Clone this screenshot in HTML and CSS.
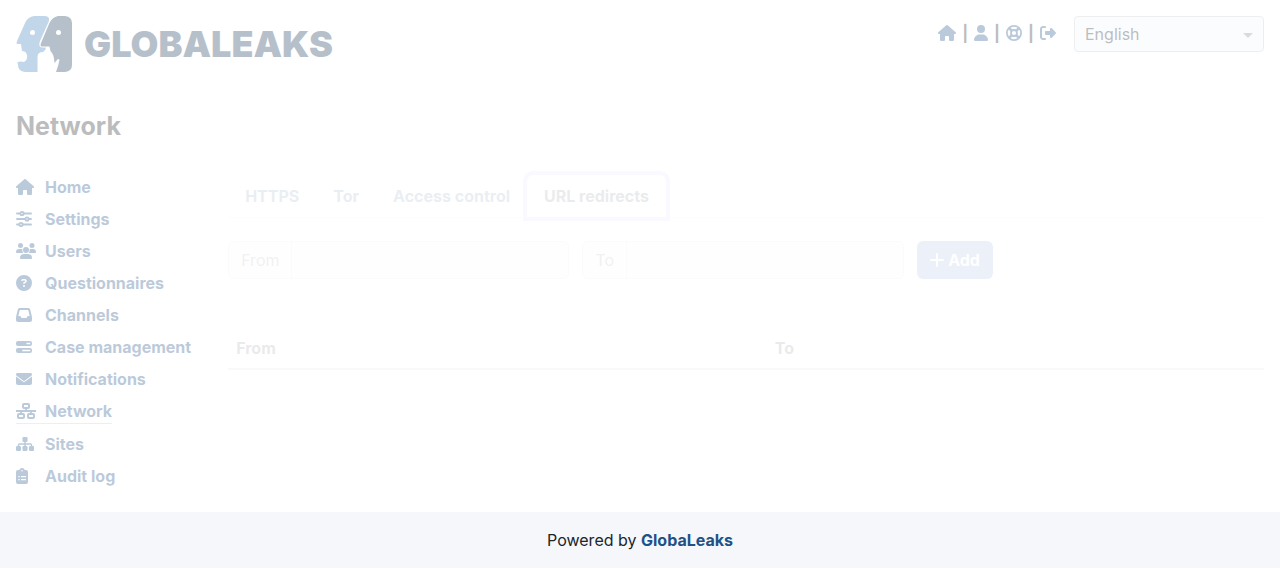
FILE: index.html
```html
<!DOCTYPE html>
<html lang="en">
<head>
<meta charset="utf-8">
<meta name="viewport" content="width=device-width, initial-scale=1">
<title>GlobaLeaks - Network</title>
<link rel="stylesheet" href="styles.css">
</head>
<body>
<div class="page">
  <header class="header">
    <a class="logo" href="#" aria-label="GlobaLeaks">
      <svg class="logo-mark" viewBox="0 0 56 56" aria-hidden="true">
        <path fill="#377abc" d="M18 0H28Q34 0 33 5L24 25Q22 31 26 31.500H30Q30 34 27 36Q21.500 36 21.500 41V56H9Q2 55 2 49L1.500 46Q5 45 8 46Q12 44 11 39Q10 35 6 35L5 28H1Q0 27 1 25L9.500 6Q12 1 18 0Z"/>
        <path fill="#103253" d="M42 0H49Q56 1 56 7V49Q56 55 49 56H40L42 50L43.500 44Q42.500 42 41 44L38.500 47Q38 38 34.500 35L33.500 30.500H25Q24 29 25 27L33 8Q36 1 42 0Z"/>
        <circle cx="16.500" cy="16.500" r="2.500" fill="#fff"/>
        <circle cx="42.500" cy="16.500" r="2.500" fill="#fff"/>
      </svg>
      <span class="logo-text">GLOBALEAKS</span>
    </a>
    <div class="header-tools">
      <nav class="quick" aria-label="Account">
        <a href="#" aria-label="Home"><svg class="icon" viewBox="0 0 576 512"><use href="#i-home"/></svg></a>
        <span>|</span>
        <a href="#" aria-label="Preferences"><svg class="icon" viewBox="0 0 448 512"><path d="M224 256A128 128 0 1 0 224 0a128 128 0 1 0 0 256zm-45.700 48C79.800 304 0 383.800 0 482.300C0 498.700 13.300 512 29.700 512H418.300c16.400 0 29.700-13.300 29.700-29.700C448 383.800 368.200 304 269.700 304H178.300z"/></svg></a>
        <span>|</span>
        <a href="#" aria-label="Support"><svg class="icon line" viewBox="0 0 16 16"><circle cx="8" cy="8" r="7.100" stroke-width="1.800"/><circle cx="8" cy="8" r="3" stroke-width="1.800"/><path stroke-width="2.500" d="M3 3l3 3M13 3l-3 3M3 13l3-3M13 13l-3-3"/></svg></a>
        <span>|</span>
        <a href="#" aria-label="Log out"><svg class="icon" viewBox="0 0 512 512"><path d="M377.900 105.900L500.700 228.700c7.200 7.200 11.300 17.100 11.300 27.300s-4.100 20.100-11.300 27.300L377.900 406.100c-6.400 6.400-15 9.900-24 9.900c-18.700 0-33.900-15.200-33.900-33.900l0-62.100-128 0c-17.700 0-32-14.300-32-32l0-64c0-17.700 14.300-32 32-32l128 0 0-62.100c0-18.700 15.200-33.900 33.900-33.900c9 0 17.600 3.600 24 9.900zM160 96L96 96c-17.700 0-32 14.300-32 32l0 256c0 17.700 14.300 32 32 32l64 0c17.700 0 32 14.300 32 32s-14.300 32-32 32l-64 0c-53 0-96-43-96-96L0 128C0 75 43 32 96 32l64 0c17.700 0 32 14.300 32 32s-14.300 32-32 32z"/></svg></a>
      </nav>
      <div class="language">
        <select aria-label="Language"><option>English</option></select>
        <svg class="caret" viewBox="0 0 10 5" aria-hidden="true"><path d="M0 0H10L5 5Z"/></svg>
      </div>
    </div>
  </header>

  <h1 class="title">Network</h1>

  <div class="columns">
    <nav class="sidebar" aria-label="Administration">
      <a href="#"><span class="slot"><svg class="icon" viewBox="0 0 576 512"><path id="i-home" d="M575.800 255.500c0 18-15 32.100-32 32.100h-32l.7 160.200c0 2.700-.2 5.400-.5 8.100V472c0 22.100-17.900 40-40 40H456c-1.100 0-2.200 0-3.300-.1c-1.400 .1-2.800 .1-4.200 .1H416 392c-22.100 0-40-17.900-40-40V448 384c0-17.700-14.300-32-32-32H256c-17.700 0-32 14.300-32 32v64 24c0 22.100-17.900 40-40 40H160 128.100c-1.500 0-3-.1-4.500-.2c-1.200 .1-2.400 .2-3.600 .2H104c-22.100 0-40-17.900-40-40V360c0-.9 0-1.900 .1-2.800V287.600H32c-18 0-32-14-32-32.100c0-9 3-17 10-24L266.400 8c7-7 15-8 22-8s15 2 21 7L564.800 231.500c8 7 12 15 11 24z"/></svg></span>Home</a>
      <a href="#"><span class="slot"><svg class="icon line" viewBox="0 0 16 16" stroke-width="1.900" stroke-linecap="round"><path d="M1 2.500H4M8 2.500H15M1 8H9M13 8H15M1 13.500H3M7 13.500H15"/><circle cx="6" cy="2.500" r="1.600"/><circle cx="11" cy="8" r="1.600"/><circle cx="5" cy="13.500" r="1.600"/></svg></span>Settings</a>
      <a href="#"><span class="slot"><svg class="icon" viewBox="0 0 20 16"><circle cx="4.500" cy="2.500" r="2.500"/><circle cx="16" cy="2.500" r="2.500"/><circle cx="10" cy="7" r="3"/><path d="M3.300 6H5Q6 6 6.500 6.300Q6 8.500 7.300 10H.7Q0 10 0 9.300Q0 6 3.300 6ZM15 6H16.700Q20 6 20 9.300Q20 10 19.300 10H12.700Q14 8.500 13.500 6.300Q14 6 15 6ZM8.200 11H11.800Q16 11 16 15.200Q16 16 15.200 16H4.800Q4 16 4 15.200Q4 11 8.200 11Z"/></svg></span>Users</a>
      <a href="#"><span class="slot"><svg class="icon" viewBox="0 0 512 512"><path d="M256 512A256 256 0 1 0 256 0a256 256 0 1 0 0 512zM169.800 165.300c7.900-22.300 29.100-37.300 52.800-37.300h58.300c34.900 0 63.100 28.300 63.100 63.100c0 22.600-12.100 43.500-31.700 54.800L280 264.400c-.2 13-10.900 23.600-24 23.600c-13.300 0-24-10.700-24-24V250.500c0-8.600 4.600-16.500 12.100-20.800l44.300-25.400c4.700-2.700 7.600-7.700 7.600-13.100c0-8.400-6.800-15.100-15.100-15.100H222.600c-3.400 0-6.400 2.100-7.500 5.300l-.4 1.200c-4.400 12.500-18.200 19-30.600 14.600s-19-18.200-14.600-30.600l.4-1.200zM224 352a32 32 0 1 1 64 0 32 32 0 1 1 -64 0z"/></svg></span>Questionnaires</a>
      <a href="#"><span class="slot"><svg class="icon" viewBox="0 0 512 512"><path d="M121 32C91.600 32 66 52 58.900 80.500L1.900 308.400C.6 313.500 0 318.700 0 323.900V416c0 35.300 28.700 64 64 64H448c35.300 0 64-28.700 64-64V323.900c0-5.200-.6-10.400-1.900-15.500l-57-227.900C446 52 420.400 32 391 32H121zm0 64H391l48 192H387.800c-12.100 0-23.200 6.800-28.600 17.700l-14.300 28.600c-5.400 10.800-16.500 17.700-28.600 17.700H195.800c-12.100 0-23.200-6.800-28.600-17.700l-14.300-28.600c-5.400-10.800-16.500-17.700-28.600-17.700H73L121 96z"/></svg></span>Channels</a>
      <a href="#"><span class="slot"><svg class="icon" viewBox="0 0 16 16"><path fill-rule="evenodd" d="M2 2H14Q16 2 16 4V5Q16 7 14 7H2Q0 7 0 5V4Q0 2 2 2ZM10.500 3.800V5.200H14.300V3.800ZM2 9H14Q16 9 16 11V12Q16 14 14 14H2Q0 14 0 12V11Q0 9 2 9ZM6.300 10.800V12.200H14.300V10.800Z"/></svg></span>Case management</a>
      <a href="#"><span class="slot"><svg class="icon" viewBox="0 0 512 512"><path d="M48 64C21.500 64 0 85.500 0 112c0 15.100 7.100 29.300 19.200 38.400L236.800 313.600c11.400 8.500 27 8.500 38.400 0L492.800 150.400c12.100-9.100 19.200-23.300 19.200-38.400c0-26.500-21.500-48-48-48H48zM0 176V384c0 35.300 28.700 64 64 64H448c35.300 0 64-28.700 64-64V176L294.400 339.200c-22.800 17.100-54 17.100-76.800 0L0 176z"/></svg></span>Notifications</a>
      <a class="current" href="#" aria-current="page"><span class="slot"><svg class="icon line" viewBox="0 0 20 16" stroke-width="2"><rect x="7" y="1" width="6" height="4" rx="1"/><rect x="2" y="11" width="6" height="4" rx="1"/><rect x="12" y="11" width="6" height="4" rx="1"/><path stroke-width="1.800" d="M0 8H20M10 5V8M5 8V11M15 8V11"/></svg></span>Network</a>
      <a href="#"><span class="slot"><svg class="icon" viewBox="0 0 18 16"><rect x="6.500" y="1" width="5" height="5" rx="1.300"/><rect x="0" y="10" width="5" height="5" rx="1.300"/><rect x="6.500" y="10" width="5" height="5" rx="1.300"/><rect x="13" y="10" width="5" height="5" rx="1.300"/><path d="M8.300 5H9.700V7.300H14.500Q16.200 7.300 16.200 9V11H14.800V8.700H9.700V11H8.300V8.700H3.200V11H1.800V9Q1.800 7.300 3.500 7.300H8.300Z"/></svg></span>Sites</a>
      <a href="#"><span class="slot"><svg class="icon" viewBox="0 0 12 16"><path fill-rule="evenodd" d="M2 2H3.200Q4 0 6 0T8.800 2H10Q12 2 12 4V14Q12 16 10 16H2Q0 16 0 14V4Q0 2 2 2ZM5.200 2.800A.8.800 0 1 0 6.800 2.800A.8.800 0 1 0 5.200 2.800ZM2.300 8V9.300H3.700V8ZM5 8V9.200H10V8ZM2.300 11V12.300H3.700V11ZM5 11V12.200H10V11Z"/></svg></span>Audit log</a>
    </nav>

    <main class="content">
      <div class="tabs" role="tablist">
        <button type="button" role="tab">HTTPS</button>
        <button type="button" role="tab">Tor</button>
        <button type="button" role="tab">Access control</button>
        <button type="button" role="tab" class="active" aria-selected="true">URL redirects</button>
      </div>
      <form class="redirect-form">
        <div class="group"><label for="from">From</label><input id="from" type="text"></div>
        <div class="group"><label for="to">To</label><input id="to" type="text"></div>
        <button class="add" type="button"><svg class="plus" viewBox="0 0 14 14" aria-hidden="true"><path d="M7 1V13M1 7H13"/></svg>Add</button>
      </form>
      <table class="redirects">
        <thead><tr><th scope="col">From</th><th scope="col">To</th></tr></thead>
      </table>
    </main>
  </div>
</div>
<footer class="footer">Powered by&nbsp;<a href="#">GlobaLeaks</a></footer>
</body>
</html>
```
FILE: styles.css
```css
* { box-sizing: border-box; }

body {
  margin: 0;
  min-height: 100vh;
  display: flex;
  flex-direction: column;
  background: #fff;
  color: #212529;
  font: 16px/24px Inter, "Liberation Sans", sans-serif;
}

a { color: #1d5288; font-weight: 700; text-decoration: none; }

button, input, select { font: inherit; color: inherit; }

/* The whole page is dimmed while data is loading. */
.page {
  flex: 1;
  padding: 16px;
  opacity: 0.3;
}

.icon { display: block; height: 16px; fill: currentColor; }
.icon.line { fill: none; stroke: currentColor; }

.header {
  display: flex;
  justify-content: space-between;
  align-items: flex-start;
}

.logo { display: flex; align-items: center; gap: 12px; color: #103253; }
.logo-mark { width: 56px; height: 56px; }
.logo-text { font-size: 36px; line-height: 56px; font-weight: 900; }

.header-tools { display: flex; gap: 18px; }
.quick { display: flex; align-items: center; gap: 6px; height: 34px; font-weight: 700; }

.language { position: relative; width: 190px; }
.language select {
  appearance: none;
  display: block;
  width: 100%;
  height: 36px;
  padding: 0 10px;
  border: 1px solid #c8cacc;
  border-radius: 4px;
  background: #f3f7fd;
}
.caret {
  position: absolute;
  right: 11px;
  top: 17px;
  width: 10px;
  height: 5px;
  fill: #85898d;
  pointer-events: none;
}

.title { margin: 39px 0 33px; font-size: 25px; line-height: 31px; font-weight: 700; }

.columns { display: flex; align-items: flex-start; gap: 37px; }

.sidebar { display: flex; flex-direction: column; align-items: flex-start; gap: 8px; }
.sidebar a { display: flex; align-items: center; white-space: nowrap; }
.sidebar .current { border-bottom: 1px solid #bccbe0; }
.slot { width: 29px; }

.content { flex: 1; opacity: 0.3; }

.tabs { display: flex; border-bottom: 1px solid #eef0f2; }
.tabs button {
  height: 42px;
  padding: 0 17px;
  border: 0;
  border-radius: 6px 6px 0 0;
  background: none;
  color: #1d5288;
  font-weight: 700;
}
.tabs .active { color: #212f48; background: #fff; box-shadow: 0 0 0 4px #c2c8ff; }

.redirect-form { display: flex; gap: 13px; margin-top: 23px; }
.group {
  display: flex;
  height: 38px;
  border: 1px solid #cce4e8;
  border-radius: 6px;
  background: #f6fafa;
  overflow: hidden;
}
.group label { padding: 6px 12px; border-right: 1px solid #cce4e8; color: #6a6d60; }
.group input { width: 276px; border: 0; background: none; }
.add {
  display: flex;
  align-items: center;
  gap: 4px;
  height: 38px;
  padding: 0 13px;
  border: 0;
  border-radius: 6px;
  background: #3464bc;
  color: #fff;
  font-weight: 700;
}
.plus { width: 14px; height: 14px; fill: none; stroke: currentColor; stroke-width: 2; stroke-linecap: round; }

.redirects { width: 100%; margin-top: 49px; border-collapse: collapse; }
.redirects th { padding: 8px; border-bottom: 2px solid #c4c6c8; text-align: left; font-weight: 700; }
.redirects th:first-child { width: 52%; }

.footer {
  display: flex;
  justify-content: center;
  padding: 16px;
  background: #f5f7fb;
}
```
